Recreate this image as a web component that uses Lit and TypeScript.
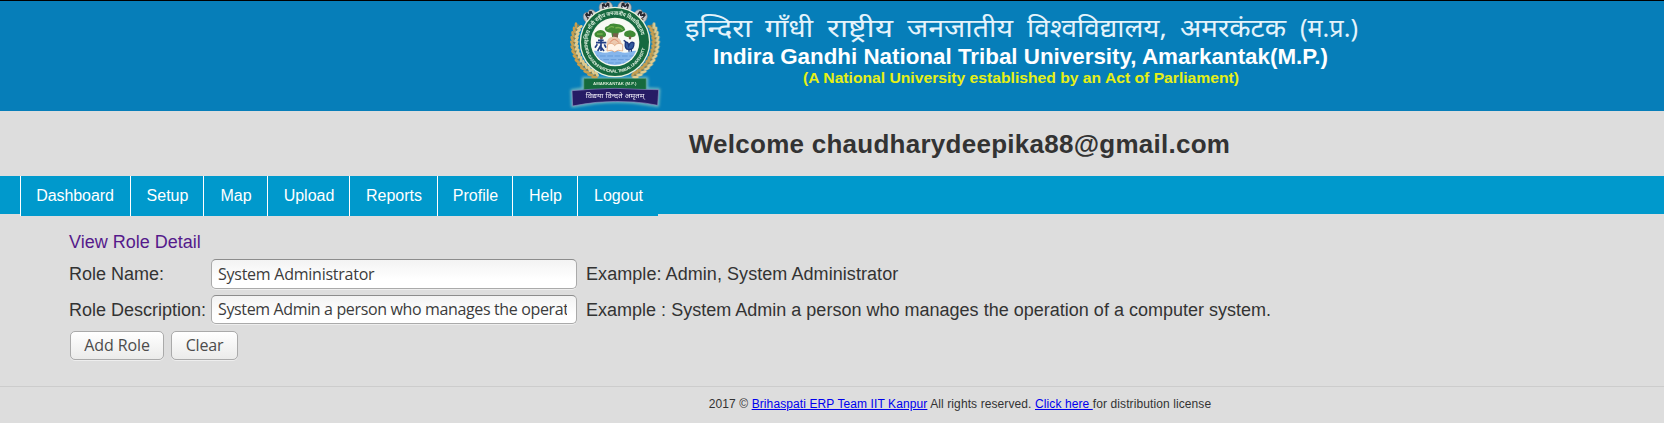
import { LitElement, html, css, svg } from "lit";
import { customElement, property } from "lit/decorators.js";

@customElement("university-crest")
class UniversityCrest extends LitElement {
  static styles = css`
    :host { display: block; }
    svg { display: block; }
  `;
  render() {
    const leaves = Array.from({ length: 14 }, (_, i) => i);
    const leaf = (side: number) => leaves.map((i) => {
      const a = (150 - i * 6.6) * Math.PI / 180;
      const cx = 165 + side * Math.sin(a) * 122;
      const cy = 126 - Math.cos(a) * 114;
      return svg`<g transform=${`translate(${cx} ${cy}) rotate(${side * (i * -6.6 + 60)})`}>
        <ellipse cx="-7" cy="0" rx="4.5" ry="10" fill="#c99f4e" transform="rotate(-28)"/>
        <ellipse cx="7" cy="0" rx="4.5" ry="10" fill="#e3cb8c" transform="rotate(28)"/>
        <circle r="3" fill="#9a7a3c"/></g>`;
    });
    const animal = (x: number, y: number, r: number) => svg`<g transform=${`translate(${x} ${y}) rotate(${r})`}>
      <path d="M-19 12C-24-2-18-15-8-16L0-12 8-16C19-14 23 0 18 12L9 17H-10Z" fill="#c3c5c8" stroke="#7d8085" stroke-width="2"/>
      <path d="M-11-11L-3-14 0-5 5-14 12-10 10 3 0 0-11 4Z" fill="#26262f"/>
      <path d="M-14 5L-5 2 0 8 6 2 14 5 9 11H-9Z" fill="#54453e"/>
      <path d="M-7-3L0 4 7-3" fill="none" stroke="#eef" stroke-width="3"/></g>`;
    return html`<svg width="110" height="111" viewBox="0 0 330 333">
      <defs>
        <filter id="soft" x="-5%" y="-5%" width="110%" height="110%"><feGaussianBlur stdDeviation="2.2"/></filter>
        <filter id="glow" x="-10%" y="-10%" width="120%" height="120%"><feGaussianBlur stdDeviation="4"/></filter>
        <path id="top" d="M84 126A81 81 0 0 1 246 126"/>
        <path id="low" d="M73 126A92 92 0 0 0 257 126"/>
        <clipPath id="disc"><circle cx="165" cy="124" r="69"/></clipPath>
      </defs>
      <path d="M36 272L70 267V235H260V267L296 269L293 316L222 306Q165 302 110 307L38 318Z" fill="none" stroke="#8fc8c0" stroke-width="7" filter="url(#glow)"/>
      <g filter="url(#soft)">
        ${leaf(-1)}${leaf(1)}
        ${animal(90, 48, -32)}${animal(138, 22, -10)}${animal(194, 22, 10)}${animal(242, 48, 32)}
        <circle cx="165" cy="126" r="106" fill="#e9f1df"/>
        <circle cx="165" cy="126" r="102" fill="#17693f"/>
        <circle cx="165" cy="126" r="73" fill="#f5f8ee"/>
        <g clip-path="url(#disc)" transform="translate(0 2)">
          <rect x="90" y="50" width="150" height="150" fill="#f8faf5"/>
          <path d="M90 153Q105 147 120 153T150 153T180 153T210 153T245 153V200H90Z" fill="#86b6ec"/>
          <path d="M98 166H230M108 177H222M122 187H210" stroke="#659bd9" stroke-width="3" stroke-dasharray="17 5"/>
          <path d="M138 92Q128 80 144 76Q152 66 170 70Q192 72 196 88Q186 96 176 96L172 112H157L154 96Q146 97 138 92Z" fill="#3f8a35"/>
          <path d="M107 108Q97 98 113 90Q126 84 135 94Q142 104 134 109Q120 114 107 108ZM194 106Q188 94 203 90Q217 86 226 97Q230 106 219 109Q206 112 194 106Z" fill="#3f8a35"/>
          <path d="M142 85Q152 74 162 80M166 82Q181 77 188 88M111 100H128" stroke="#74b04e" stroke-width="4" fill="none"/>
          <path d="M158 98L160 122H172L175 98ZM118 107L121 116H128L129 107ZM206 107L207 116H213L214 107Z" fill="#78604b"/>
          <path d="M140 132Q140 108 161 108Q183 108 186 132L180 150H144Z" fill="#ecc9ae"/>
          <path d="M143 131Q158 124 164 135Q172 124 188 131V151Q173 145 164 154Q155 145 141 151Z" fill="#fff4e7" stroke="#db9b71" stroke-width="2"/>
          <path d="M150 126Q162 106 177 126" stroke="#dc8969" stroke-width="3" fill="none"/>
          <path d="M108 126H139M114 119H131M123 116V151M112 131L105 141M133 131L138 141M113 151L121 137 132 151" stroke="#243f86" stroke-width="5" fill="none"/>
          <path d="M196 126Q193 147 207 146Q222 148 222 127Q212 120 206 135Q204 121 196 126ZM207 146V153M214 146V153M199 124L191 119" fill="#315a9d" stroke="#1b357c" stroke-width="4"/>
        </g>
        <text font-family="Noto Sans, Liberation Sans, sans-serif" font-size="17" font-weight="700" fill="#d8eddc"><textPath href="#top" textLength="234" lengthAdjust="spacingAndGlyphs">इन्दिरा गाँधी राष्ट्रीय जनजातीय विश्वविद्यालय</textPath></text>
        <text font-family="Liberation Sans, sans-serif" font-size="13" font-weight="700" fill="#e1eee0"><textPath href="#low" textLength="270">INDIRA GANDHI NATIONAL TRIBAL UNIVERSITY</textPath></text>
        <path d="M72 236H258V270H72Z" fill="#126a3c" stroke="#519263" stroke-width="2"/>
        <text x="99" y="256" textLength="130" font-family="Liberation Sans, sans-serif" font-size="13" font-weight="700" fill="#d5e6d1">AMARKANTAK (M.P.)</text>
        <path d="M36 272Q70 270 90 268Q165 262 240 268L296 269L293 316Q255 308 222 306Q165 302 110 307Q74 311 38 318Z" fill="#251b65" stroke="#8c8cc0" stroke-width="2"/>
        <text x="77" y="294" textLength="176" lengthAdjust="spacingAndGlyphs" font-family="Noto Sans, Liberation Sans, sans-serif" font-size="21" fill="#f2effa">विद्यया विन्दते अमृतम्</text>
      </g>
    </svg>`;
  }
}

@customElement("site-banner")
class SiteBanner extends LitElement {
  static styles = css`
    :host { display: flex; box-sizing: border-box; height: 111px; padding-left: 560px; background: #067eb9; }
    .title { display: block; }
  `;
  render() {
    const words: [string, number, number][] = [
      ["इन्दिरा", 685, 67], ["गाँधी", 765, 48], ["राष्ट्रीय", 827, 66], ["जनजातीय", 907, 106],
      ["विश्वविद्यालय,", 1027, 140], ["अमरकंटक", 1180, 106], ["(म.प्र.)", 1300, 58],
    ];
    return html`<university-crest></university-crest>
      <svg class="title" width="720" height="111" viewBox="670 0 720 111">
        <g font-family="Noto Sans, Liberation Sans, sans-serif" font-size="26" font-weight="400" fill="#e4f3fb">
          ${words.map(([w, x, len]) => svg`<text x=${x} y="37" textLength=${len} lengthAdjust="spacingAndGlyphs">${w}</text>`)}
        </g>
        <text x="713" y="64.4" textLength="615" lengthAdjust="spacingAndGlyphs" font-family="Liberation Sans, Arial, sans-serif" font-size="22.5" font-weight="700" fill="#fff">Indira Gandhi National Tribal University, Amarkantak(M.P.)</text>
        <text x="803" y="83" textLength="436" lengthAdjust="spacingAndGlyphs" font-family="Liberation Sans, Arial, sans-serif" font-size="15.5" font-weight="700" fill="#e6f015">(A National University established by an Act of Parliament)</text>
      </svg>`;
  }
}

@customElement("main-nav")
class MainNav extends LitElement {
  @property({ attribute: false }) items: [string, number][] = [];
  static styles = css`
    :host { display: flex; height: 38px; padding-left: 20px; background: #0099cc; }
    .item { box-sizing: border-box; height: 40px; padding-left: 1px; border-left: 1px solid #fff; background: #0099cc; color: #fff; font-size: 16px; line-height: 39px; text-align: center; text-decoration: none; }
    .item:first-child { padding: 0 1px 0 0; letter-spacing: -0.08px; }
  `;
  render() {
    return html`${this.items.map(([name, width]) => html`<a class="item" href="#" style="width:${width}px">${name}</a>`)}`;
  }
}

@customElement("app-root")
class AppRoot extends LitElement {
  static styles = css`
    :host { display: block; height: 423px; overflow: hidden; background: #ddd; color: #333; font-family: "Liberation Sans", Arial, sans-serif; }
    .top { height: 1px; margin-bottom: -1px; position: relative; background: #000; }
    .welcome { width: 1919px; height: 65px; margin: 0; text-align: center; font-size: 26px; line-height: 66px; font-weight: 700; letter-spacing: 0.26px; }
    .content { padding: 18px 0 0 69px; font-size: 18px; }
    .detail { display: block; height: 20px; line-height: 20px; color: #551a8b; text-decoration: none; }
    .grid { display: grid; grid-template-columns: 142px 366px auto; grid-template-rows: 31px 30px; row-gap: 5px; margin-top: 7px; align-items: center; }
    .hint { padding-left: 9px; letter-spacing: 0.01px; }
    .hint.short { letter-spacing: 0.06px; }
    .field { box-sizing: border-box; align-self: start; width: 366px; height: 30px; margin: 0; padding: 0 7px 1px 6px; border: 1px solid #aaa; border-top-color: #8c8c8c; border-radius: 5px; background: linear-gradient(#f3f3f3, #fff 70%); box-shadow: 0 1px 0 #eee; color: #3c3c3c; font: 16px "Open Sans", sans-serif; letter-spacing: -0.25px; outline: none; }
    .field.low { height: 29px; padding-right: 9px; letter-spacing: -0.36px; }
    .actions { display: flex; gap: 7px; padding: 6px 0 0 1px; }
    .button { box-sizing: border-box; height: 29px; padding: 0 0 1px; border: 1px solid #aaa; border-radius: 5px; background: linear-gradient(#fff, #ebebea); box-shadow: 0 1px 0 #eee; color: #4c4c4c; font: 16px "Open Sans", sans-serif; }
    .add { width: 94px; letter-spacing: -0.1px; }
    .clear { width: 67px; letter-spacing: -0.2px; }
    .footer { width: 1920px; margin-top: 26px; border-top: 1px solid #ccc; text-align: center; font-size: 12px; line-height: 34px; letter-spacing: 0.1px; }
    .link { color: #00e; text-decoration: underline; }
  `;
  render() {
    return html`
      <div class="top"></div>
      <site-banner></site-banner>
      <h1 class="welcome">Welcome chaudharydeepika88@gmail.com</h1>
      <main-nav .items=${[["Dashboard", 110], ["Setup", 73], ["Map", 64], ["Upload", 82], ["Reports", 88], ["Profile", 75], ["Help", 65], ["Logout", 81]]}></main-nav>
      <main class="content">
        <a class="detail" href="#">View Role Detail</a>
        <div class="grid">
          <label>Role Name:</label><input class="field" .value=${"System Administrator"}><span class="hint short">Example: Admin, System Administrator</span>
          <label>Role Description:</label><input class="field low" .value=${"System Admin a person who manages the operation of a computer system."}><span class="hint">Example : System Admin a person who manages the operation of a computer system.</span>
        </div>
        <div class="actions"><button class="button add">Add Role</button><button class="button clear">Clear</button></div>
      </main>
      <footer class="footer">2017 © <a class="link" href="#">Brihaspati ERP Team IIT Kanpur</a> All rights reserved. <a class="link" href="#">Click here </a>for distribution license</footer>`;
  }
}
